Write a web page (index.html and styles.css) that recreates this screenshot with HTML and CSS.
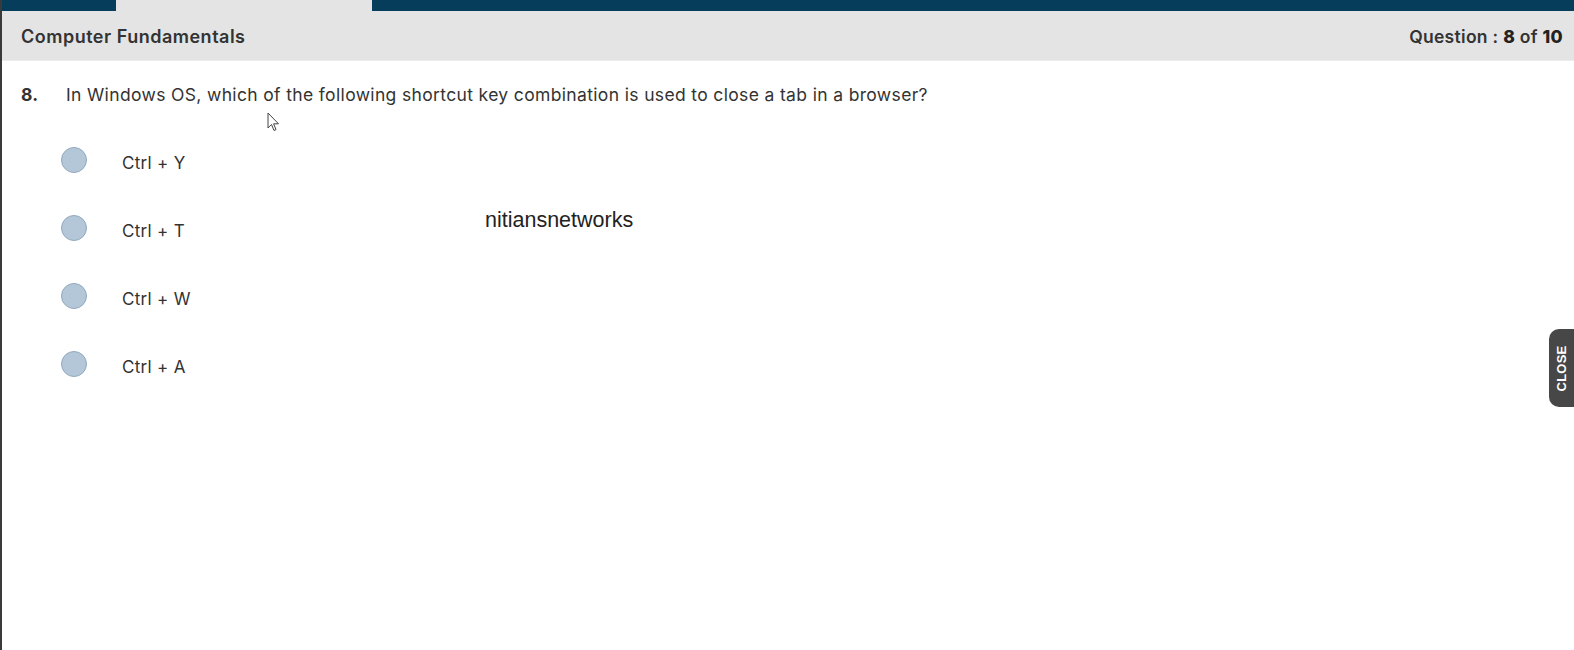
FILE: index.html
```html
<!DOCTYPE html>
<html>
<head>
<meta charset="utf-8">
<link rel="stylesheet" href="styles.css">
</head>
<body>
<div class="frame">
  <div class="topbar">
    <div class="seg seg-left"></div>
    <div class="seg seg-gap"></div>
    <div class="seg seg-right"></div>
  </div>
  <header class="header">
    <span class="subject">Computer Fundamentals</span>
    <span class="counter">Question : <b>8</b> of <b>10</b></span>
  </header>
  <main class="question">
    <div class="qline">
      <span class="qnum">8.</span>
      <span class="qtext">In Windows OS, which of the following shortcut key combination is used to close a tab in a browser?</span>
    </div>
    <ul class="options">
      <li class="option"><span class="radio"></span><span class="label">Ctrl + Y</span></li>
      <li class="option"><span class="radio"></span><span class="label">Ctrl + T</span></li>
      <li class="option"><span class="radio"></span><span class="label">Ctrl + W</span></li>
      <li class="option"><span class="radio"></span><span class="label">Ctrl + A</span></li>
    </ul>
  </main>
  <div class="watermark">nitiansnetworks</div>
  <svg class="cursor" width="14" height="20" viewBox="0 0 14 20"><path d="M1 1 L1 16 L4.5 12.5 L7 18.5 L9 17.6 L6.6 11.8 L11.5 11.8 Z" fill="#fff" stroke="#444" stroke-width="1"/></svg>
  <div class="close-tab"><span>CLOSE</span></div>
</div>
</body>
</html>
```
FILE: styles.css
```css
* { box-sizing: border-box; }
html, body { margin: 0; padding: 0; background: #fff; }
body { width: 1574px; height: 650px; overflow: hidden; font-family: Inter, "Open Sans", "Liberation Sans", sans-serif; color: #333; }
.frame { position: relative; height: 650px; border-left: 2px solid #3a3a3a; }
.topbar { display: flex; height: 11px; }
.seg-left { width: 114px; background: #053d5b; }
.seg-gap { width: 256px; background: #e4e4e4; }
.seg-right { flex: 1; background: #053d5b; }
.header { display: flex; justify-content: space-between; align-items: center; height: 50px; background: #e4e4e4; padding: 1px 11px 0 19px; border-bottom: 1px solid #ececec; }
.subject { font-size: 18px; font-weight: 600; color: #333; letter-spacing: 0.5px; }
.counter { font-size: 17.5px; font-weight: 600; color: #333; letter-spacing: 0.3px; }
.counter b { font-weight: 800; color: #222; }
.question { padding: 23px 0 0 19px; }
.qline { display: flex; align-items: baseline; font-size: 17.5px; color: #333; letter-spacing: 0.35px; }
.qnum { width: 45px; font-weight: 700; }
.options { list-style: none; margin: 0; padding: 0 0 0 40px; }
.option { display: flex; align-items: center; height: 68px; }
.option:first-child { margin-top: 24px; }
.radio { width: 26px; height: 26px; border-radius: 50%; background: #b4c7d9; border: 1px solid #91a8bd; margin-top: -6px; }
.label { margin-left: 35px; font-size: 17px; color: #333; letter-spacing: 0.3px; }
.watermark { position: absolute; left: 483px; top: 208px; font-family: "Liberation Sans", Arial, sans-serif; font-size: 21.5px; color: #222; }
.cursor { position: absolute; left: 265px; top: 112px; }
.close-tab { position: absolute; right: 0; top: 329px; width: 25px; height: 78px; background: #474747; border-radius: 10px 0 0 10px; display: flex; align-items: center; justify-content: center; }
.close-tab span { transform: rotate(-90deg); color: #fff; font-family: "Liberation Sans", Arial, sans-serif; font-weight: 700; font-size: 13px; letter-spacing: 0.2px; }
```
